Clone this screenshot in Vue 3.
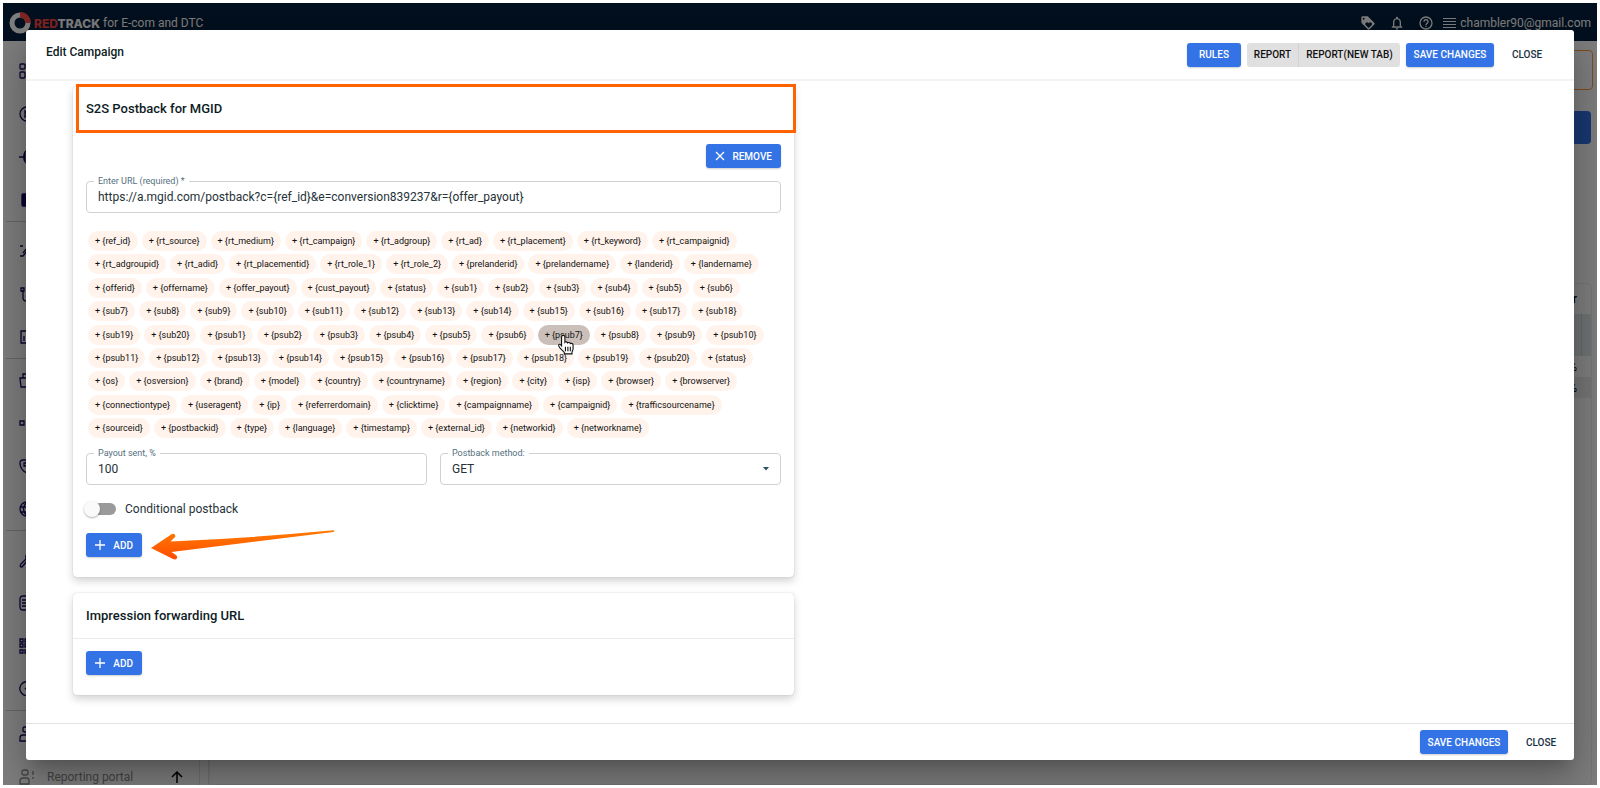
<template>
  <div class="page">
    <header class="topbar">
      <div class="brand">
        <svg class="brand-logo" viewBox="0 0 22 22">
          <circle cx="11" cy="11" r="8" fill="none" stroke="#fff" stroke-width="5" />
          <path d="M11 0a11 11 0 0 1 11 11h-5.500a5.500 5.500 0 0 0-5.500-5.500z" fill="#ff4a42" />
        </svg>
        <span class="brand-name"><span class="red">RED</span>TRACK</span>
        <span class="brand-sub">for E-com and DTC</span>
      </div>
      <div class="account">
        <svg class="top-icon" viewBox="0 0 24 24" fill="currentColor">
          <path d="M21.400 11.600l-9-9C12 2.200 11.500 2 11 2H4c-1.100 0-2 .9-2 2v7c0 .6.200 1.100.6 1.400l9 9c.8.800 2 .8 2.800 0l7-7c.8-.8.8-2 0-2.800zM5.500 7a1.500 1.500 0 1 1 0-3 1.500 1.500 0 0 1 0 3zM17.300 15.300L13 19.500l-4.300-4.200a2.500 2.500 0 0 1 3.600-3.600l.7.700.7-.7a2.500 2.500 0 0 1 3.600 3.600z" />
        </svg>
        <svg class="top-icon" viewBox="0 0 24 24" fill="currentColor">
          <path d="M12 22c1.100 0 2-.9 2-2h-4c0 1.100.9 2 2 2zm6-6v-5c0-3.100-1.600-5.600-4.500-6.300V4a1.500 1.500 0 0 0-3 0v.7C7.600 5.400 6 7.900 6 11v5l-2 2v1h16v-1l-2-2zm-2 1H8v-6c0-2.500 1.500-4.500 4-4.500s4 2 4 4.500v6z" />
        </svg>
        <svg class="top-icon help" viewBox="0 0 24 24" fill="none" stroke="currentColor" stroke-width="2">
          <circle cx="12" cy="12" r="9" />
          <path d="M9 10a3 3 0 1 1 4.500 2.600c-1 .6-1.500 1.100-1.500 2.400M12 16v2" />
        </svg>
        <svg class="burger" viewBox="0 0 13 12" stroke="currentColor">
          <path d="M0 1.500h13M0 4.500h13M0 7.500h13M0 10.500h13" />
        </svg>
        <span class="email">chambler90@gmail.com</span>
      </div>
    </header>

    <div class="workspace">
      <nav class="sidebar">
        <div v-for="(group, g) in menu" :key="g" class="menu-group" :class="{ spaced: group.spaced }">
          <a v-for="item in group.items" :key="item.name" href="#" class="menu-item" :class="{ muted: item.label }" :aria-label="item.name">
            <svg class="menu-icon" viewBox="0 0 16 16" fill="none" stroke="currentColor" stroke-width="1.300">
              <path :d="item.path" :fill="item.solid ? 'currentColor' : 'none'" />
            </svg>
            <span v-if="item.label" class="menu-label">{{ item.label }}</span>
            <svg v-if="item.label" class="menu-arrow" viewBox="0 0 12 12" fill="none" stroke="#000" stroke-width="1.500">
              <path d="M6 12V1M1 6l5-5 5 5" />
            </svg>
          </a>
        </div>
      </nav>
      <main class="content">
        <div class="notice"></div>
        <button type="button" class="create" aria-label="Create"></button>
        <div class="stats">
          <table>
            <thead>
              <tr><th>r</th><th class="edge"></th></tr>
            </thead>
            <tbody>
              <tr class="totals"><td></td><td class="edge"></td></tr>
              <tr><td>%</td><td class="edge"></td></tr>
              <tr class="odd"><td>%</td><td class="edge"></td></tr>
            </tbody>
          </table>
        </div>
      </main>
    </div>

    <div class="overlay">
      <section class="modal" role="dialog" aria-labelledby="modal-title">
        <header class="modal-header">
          <h1 id="modal-title">Edit Campaign</h1>
          <div class="actions">
            <button type="button" class="btn primary rules">RULES</button>
            <div class="btn-group">
              <button type="button" class="btn grey report">REPORT</button>
              <button type="button" class="btn grey report-tab">REPORT(NEW TAB)</button>
            </div>
            <button type="button" class="btn primary save">SAVE CHANGES</button>
            <button type="button" class="btn flat">CLOSE</button>
          </div>
        </header>

        <div class="modal-body">
          <div class="column">
            <section class="card">
              <h2 class="highlighted">S2S Postback for MGID</h2>
              <div class="card-body">
                <div class="remove-row">
                  <button type="button" class="btn primary with-icon remove">
                    <svg viewBox="0 0 10 10" stroke="currentColor" stroke-width="1.300"><path d="M1 1l8 8M9 1l-8 8" /></svg>
                    <span>REMOVE</span>
                  </button>
                </div>

                <div class="field">
                  <label for="url">Enter URL (required) *</label>
                  <input id="url" v-model="url" type="text">
                </div>

                <div class="macros">
                  <button v-for="(macro, i) in macros" :key="i" type="button" class="chip" :class="{ hovered: macro === 'psub7' }" @click="addMacro(macro)">
                    + {{ '{' + macro + '}' }}
                    <svg v-if="macro === 'psub7'" class="cursor" viewBox="0 0 16 19">
                      <path d="M5.500 1.200c1 0 1.500.7 1.500 1.600v4.700c.4-.6 2.200-.6 2.500.5.700-.7 2.200-.3 2.400.7 1-.5 2.500 0 2.500 1.500v3c0 1.500-1 2.500-1 3.500v1.300H6.500v-1.300L2.300 12.300c-1.100-1.400-1.400-2-.9-2.600.7-.8 1.800-.2 2.600.9V2.800c0-.9.500-1.600 1.500-1.600z" fill="#fff" stroke="#111" />
                      <path d="M7.500 11.500v4M9.700 11.500v4M11.900 11.500v4" stroke="#111" fill="none" />
                    </svg>
                  </button>
                </div>

                <div class="field-row">
                  <div class="field">
                    <label for="payout">Payout sent, %</label>
                    <input id="payout" v-model="payout" type="text">
                  </div>
                  <div class="field">
                    <label for="method">Postback method:</label>
                    <select id="method" v-model="method">
                      <option>GET</option>
                      <option>POST</option>
                    </select>
                    <svg class="caret" viewBox="0 0 8 4"><path d="M1 0h6L4 3.500z" fill="#2d5266" /></svg>
                  </div>
                </div>

                <label class="switch">
                  <input v-model="conditional" type="checkbox">
                  <span>Conditional postback</span>
                </label>

                <div class="add-row">
                  <button type="button" class="btn primary with-icon">
                    <svg viewBox="0 0 10 10" stroke="currentColor" stroke-width="1.300"><path d="M5 0v10M0 5h10" /></svg>
                    <span>ADD</span>
                  </button>
                  <svg class="arrow" viewBox="0 0 184 32">
                    <defs>
                      <linearGradient id="arrow-fill" x1="0" y1="0" x2="0" y2="1">
                        <stop offset="0" stop-color="#ff7a00" />
                        <stop offset="1" stop-color="#ff4d00" />
                      </linearGradient>
                    </defs>
                    <path d="M0 18L20.500 4.300q2.500-1.300 3.500.7t-1 3L19.500 11.500Q100 8 182.500.300q1.500.7 0 1.700Q100 12 20.500 22l4.500 3q2 2 .8 3.500t-3.800.5z" fill="url(#arrow-fill)" />
                  </svg>
                </div>
              </div>
            </section>

            <section class="card">
              <h2>Impression forwarding URL</h2>
              <div class="card-body">
                <div class="add-row">
                  <button type="button" class="btn primary with-icon">
                    <svg viewBox="0 0 10 10" stroke="currentColor" stroke-width="1.300"><path d="M5 0v10M0 5h10" /></svg>
                    <span>ADD</span>
                  </button>
                </div>
              </div>
            </section>
          </div>
        </div>

        <footer class="modal-footer">
          <button type="button" class="btn primary save">SAVE CHANGES</button>
          <button type="button" class="btn flat">CLOSE</button>
        </footer>
      </section>
    </div>
  </div>
</template>

<script setup>
import { ref } from 'vue'

const url = ref('https://a.mgid.com/postback?c={ref_id}&e=conversion839237&r={offer_payout}')
const payout = ref('100')
const method = ref('GET')
const conditional = ref(false)

const numbered = (name, from, to) =>
  Array.from({ length: to - from + 1 }, (_, i) => name + (from + i))

const macros = [
  'ref_id', 'rt_source', 'rt_medium', 'rt_campaign', 'rt_adgroup', 'rt_ad', 'rt_placement', 'rt_keyword', 'rt_campaignid',
  'rt_adgroupid', 'rt_adid', 'rt_placementid', 'rt_role_1', 'rt_role_2', 'prelanderid', 'prelandername', 'landerid', 'landername',
  'offerid', 'offername', 'offer_payout', 'cust_payout', 'status',
  ...numbered('sub', 1, 20),
  ...numbered('psub', 1, 20),
  'status', 'os', 'osversion', 'brand', 'model', 'country', 'countryname', 'region', 'city', 'isp', 'browser', 'browserver',
  'connectiontype', 'useragent', 'ip', 'referrerdomain', 'clicktime', 'campaignname', 'campaignid', 'trafficsourcename',
  'sourceid', 'postbackid', 'type', 'language', 'timestamp', 'external_id', 'networkid', 'networkname'
]

function addMacro(macro) {
  url.value += '{' + macro + '}'
}

// Sidebar
const menu = [
  {
    items: [
      { name: 'Dashboard', path: 'M2 1h3a1 1 0 0 1 1 1v3a1 1 0 0 1-1 1H2a1 1 0 0 1-1-1V2a1 1 0 0 1 1-1zM2 9h3a1 1 0 0 1 1 1v4a1 1 0 0 1-1 1H2a1 1 0 0 1-1-1v-4a1 1 0 0 1 1-1z' },
      { name: 'Offers', path: 'M8 1a7 7 0 1 0 0 14A7 7 0 1 0 8 1M6 5v6l5-3z' },
      { name: 'Traffic', path: 'M0 8h5M10 1C3 2 3 14 10 15M6 4v8' },
      { name: 'Campaigns', path: 'M4 2h10v12H4q-1 0-1-1V3q0-1 1-1z', solid: true }
    ]
  },
  {
    spaced: true,
    items: [
      { name: 'Rules', path: 'M1 3h3M1 13h3l5-6h5M4 10l5-6' },
      { name: 'Funnels', path: 'M2 2h3v3H2zM4 4v8q0 3 4 3h5' },
      { name: 'Reports', path: 'M2 2h12v12H2zM5 7v5M8 5v7M11 9v3' }
    ]
  },
  {
    items: [
      { name: 'Logs', path: 'M4 6V2h10v12M1 6h6l2 2h6v7H2zM7 4h5' },
      { name: 'Attribution', path: 'M1 6h4v4H1zM8 3v10' },
      { name: 'Domains', path: 'M14 2H4Q1 2 1 5q0 7 7 10 6-3 6-10zM5 5h3v3H5z' },
      { name: 'Landers', path: 'M8 1a7 7 0 1 0 0 14A7 7 0 1 0 8 1M1 6h14M1 11h14M8 1q-7 7 0 14' }
    ]
  },
  {
    spaced: true,
    items: [
      { name: 'Tools', path: 'M2 12l5-5q-1-4 2-6h4L9 5l3 3q-1 2-4 1l-5 6q-3 0-1-3z' },
      { name: 'Columns', path: 'M4 1h9v14H4q-3 0-3-3V4q0-3 3-3M3 5h11M3 8h11M3 11h11' },
      { name: 'Integrations', path: 'M1 1h3v3H1zM6 1h3v3H6zM1 6h3v3H1zM6 6h3v3H6zM1 12h3v3H1zM6 12h3v3H6z' },
      { name: 'Schedule', path: 'M12 2a7 7 0 1 0 2 9M6 7l2 2 4-4' }
    ]
  },
  {
    items: [
      { name: 'Team', path: 'M5 1h3q2 0 2 2v1q0 2-2 2H6Q4 6 4 4V2zM4 9h9v6H1v-3q0-3 3-3z' },
      { name: 'Reporting portal', label: 'Reporting portal', path: 'M5 1h2q2 0 2 2v1q0 2-2 2H5Q3 6 3 4V2zM4 9h4q2 0 2 3v3H1v-3q0-3 3-3zM14 2v4M14 8v2' }
    ]
  }
]
</script>

<style>
body {
  background: #fff;
}
</style>

<style scoped>
* {
  box-sizing: border-box;
  font-family: Roboto, 'Liberation Sans', sans-serif;
}

.page {
  position: relative;
  display: flex;
  flex-direction: column;
  height: 100vh;
  border: 3px solid #fff;
  overflow: hidden;
}

/* Top bar */
.topbar {
  display: flex;
  flex: none;
  justify-content: space-between;
  align-items: center;
  height: 38px;
  padding: 2px 6px 0;
  background: #06203e;
  color: #fff;
}

.brand,
.account {
  display: flex;
  align-items: center;
}

.brand-logo {
  width: 22px;
  height: 22px;
  margin-right: 3px;
}

.brand-name,
.brand-name .red {
  font-family: Inter, sans-serif;
  font-size: 12px;
  font-weight: 800;
}

.brand-name {
  margin-right: 3px;
}

.brand-name .red {
  color: #ff4a42;
}

.brand-sub,
.email {
  font-size: 12px;
}

.account {
  gap: 13px;
}

.top-icon {
  width: 16px;
  height: 16px;
}

.help {
  margin-right: -4px;
}

.burger {
  width: 13px;
  height: 12px;
  margin-right: -9px;
}

/* Page behind the dialog */
.workspace {
  display: flex;
  flex: 1;
  min-height: 0;
  background: #fff;
}

.sidebar {
  flex: none;
  width: 197px;
  padding: 9px 3px 0;
  border-right: 1px solid #e4e4e4;
}

.menu-group {
  display: flex;
  flex-direction: column;
  gap: 3px;
  padding: 1px 0;
  border-bottom: 1px solid #ccc;
}

.menu-group.spaced {
  padding-top: 9px;
}

.menu-group:last-child {
  padding-top: 3px;
}

.menu-item {
  display: flex;
  align-items: center;
  height: 40px;
  padding: 0 13px;
  color: #180a66;
  text-decoration: none;
}

.menu-item.muted {
  color: #8a8a8a;
}

.menu-icon {
  width: 16px;
  height: 16px;
}

.menu-label {
  flex: 1;
  margin-left: 12px;
  font-size: 12px;
}

.menu-arrow {
  width: 12px;
  height: 12px;
}

.content {
  display: flex;
  flex: 1;
  flex-direction: column;
  margin-left: 8px;
  padding: 9px 4px 0 0;
  border-left: 1px solid #e4e4e4;
}

.notice {
  flex: none;
  height: 40px;
  border: 1px solid #ff9a3c;
  border-radius: 4px;
}

.create {
  flex: none;
  align-self: flex-end;
  width: 120px;
  height: 33px;
  margin: 21px 2px 139px 0;
  border: none;
  border-radius: 4px;
  background: #3373e6;
}

.stats {
  flex: 1;
  margin-right: 1px;
  border: 1px solid #eee;
  border-radius: 4px;
}

.stats table {
  width: 100%;
  border-collapse: collapse;
  font-size: 12px;
  text-align: right;
}

.stats th {
  height: 30px;
  padding: 0 4px;
  font-weight: 500;
}

.stats td {
  height: 21px;
  padding: 0 4px;
}

.stats .edge {
  width: 10px;
}

.totals td {
  height: 42px;
  background: #e0e8e8;
}

.totals .edge {
  border-left: 1px solid #ccd4d4;
}

.odd td {
  background: #ececec;
}

/* Dialog */
.overlay {
  position: absolute;
  inset: 0;
  display: flex;
  padding: 27px 23px 25px;
  background: rgba(0, 0, 0, 0.5);
}

.modal {
  display: flex;
  flex: 1;
  flex-direction: column;
  min-width: 0;
  border-radius: 3px;
  background: #fff;
  box-shadow: 0 11px 15px -7px rgba(0, 0, 0, 0.2), 0 24px 38px 3px rgba(0, 0, 0, 0.14), 0 9px 46px 8px rgba(0, 0, 0, 0.12);
}

.modal-header {
  display: flex;
  flex: none;
  justify-content: space-between;
  align-items: center;
  height: 51px;
  padding: 0 20px;
  border-bottom: 2px solid #f3f3f3;
}

h1 {
  margin: 0;
  padding-bottom: 5px;
  font-size: 12px;
  font-weight: 500;
  color: #0e1c24;
}

.actions {
  display: flex;
  gap: 6px;
}

.btn {
  height: 24px;
  padding: 0;
  border: none;
  border-radius: 3px;
  font-size: 10px;
  font-weight: 500;
  white-space: nowrap;
  cursor: pointer;
}

.btn.primary {
  background: #3373e6;
  color: #fff;
  box-shadow: 0 1px 2px rgba(0, 0, 0, 0.2);
}

.btn.grey {
  background: #e0e0e0;
  color: #111;
}

.btn.flat {
  width: 54px;
  background: none;
  color: #16303f;
}

.btn-group {
  display: flex;
}

.rules {
  width: 54px;
}

.report {
  width: 52px;
  border-right: 1px solid #d2d2d2;
  border-radius: 3px 0 0 3px;
}

.report-tab {
  width: 101px;
  border-radius: 0 3px 3px 0;
}

.save {
  width: 88px;
}

.with-icon {
  display: flex;
  justify-content: space-between;
  align-items: center;
  width: 56px;
  padding: 0 9px;
}

.with-icon svg {
  width: 10px;
  height: 10px;
}

.with-icon.remove {
  width: 75px;
}

.modal-body {
  display: grid;
  flex: 1;
  grid-template-columns: 1fr 1fr;
  gap: 12px;
  min-height: 0;
  padding: 5px 47px 0;
}

.column {
  display: flex;
  flex-direction: column;
  gap: 16px;
}

.card {
  border-radius: 4px;
  background: #fff;
  box-shadow: 0 0 1px rgba(0, 0, 0, 0.3), 0 4px 9px rgba(0, 0, 0, 0.18);
}

h2 {
  position: relative;
  margin: 0;
  padding: 0 13px;
  border-bottom: 1px solid #ebebeb;
  font-size: 13px;
  font-weight: 500;
  line-height: 45px;
  color: #0e1c24;
}

.highlighted::after {
  content: '';
  position: absolute;
  inset: -2px -2px -2px 3px;
  border: 3px solid #ff6200;
}

.card-body {
  padding: 12px 13px 20px;
}

.remove-row {
  display: flex;
  justify-content: flex-end;
  margin-bottom: 13px;
}

.field {
  position: relative;
  flex: 1;
}

.field label {
  position: absolute;
  top: -6px;
  left: 8px;
  padding: 0 4px;
  background: #fff;
  font-size: 9px;
  line-height: 12px;
  color: #54707e;
}

.field input,
.field select {
  display: block;
  width: 100%;
  height: 32px;
  padding: 0 11px;
  border: 1px solid #cfd2d4;
  border-radius: 4px;
  background: #fff;
  font-size: 12px;
  color: #263238;
  appearance: none;
}

.caret {
  position: absolute;
  top: 14px;
  right: 11px;
  width: 8px;
  height: 4px;
}

.macros {
  display: flex;
  flex-wrap: wrap;
  align-content: space-between;
  column-gap: 4px;
  min-height: 207px;
  margin: 18px 0 15px;
  padding-left: 2px;
}

.chip {
  position: relative;
  height: 20px;
  padding: 0 7px;
  border: none;
  border-radius: 10px;
  background: #fff3ec;
  font-size: 9px;
  color: #111;
  cursor: pointer;
}

.chip.hovered {
  background: #cbc0b9;
}

.cursor {
  position: absolute;
  z-index: 1;
  top: 9px;
  left: 19px;
  width: 18px;
  height: 21px;
}

.field-row {
  display: flex;
  gap: 13px;
}

.switch {
  display: flex;
  align-items: center;
  gap: 9px;
  height: 16px;
  margin: 16px 0;
  font-size: 12px;
  color: #263238;
}

.switch input {
  position: relative;
  width: 30px;
  height: 12px;
  margin: 0;
  border-radius: 6px;
  background: #9a9a9a;
  appearance: none;
}

.switch input::before {
  content: '';
  position: absolute;
  top: -2px;
  left: -2px;
  width: 16px;
  height: 16px;
  border-radius: 50%;
  background: #fafafa;
  box-shadow: 0 1px 2px rgba(0, 0, 0, 0.3);
}

.switch input:checked::before {
  left: 15px;
}

.add-row {
  position: relative;
}

.arrow {
  position: absolute;
  top: -3px;
  left: 65px;
  width: 184px;
  height: 32px;
}

.modal-footer {
  display: flex;
  flex: none;
  justify-content: flex-end;
  align-items: center;
  gap: 6px;
  height: 37px;
  padding: 0 6px;
  border-top: 1px solid #e2e2e2;
}
</style>
